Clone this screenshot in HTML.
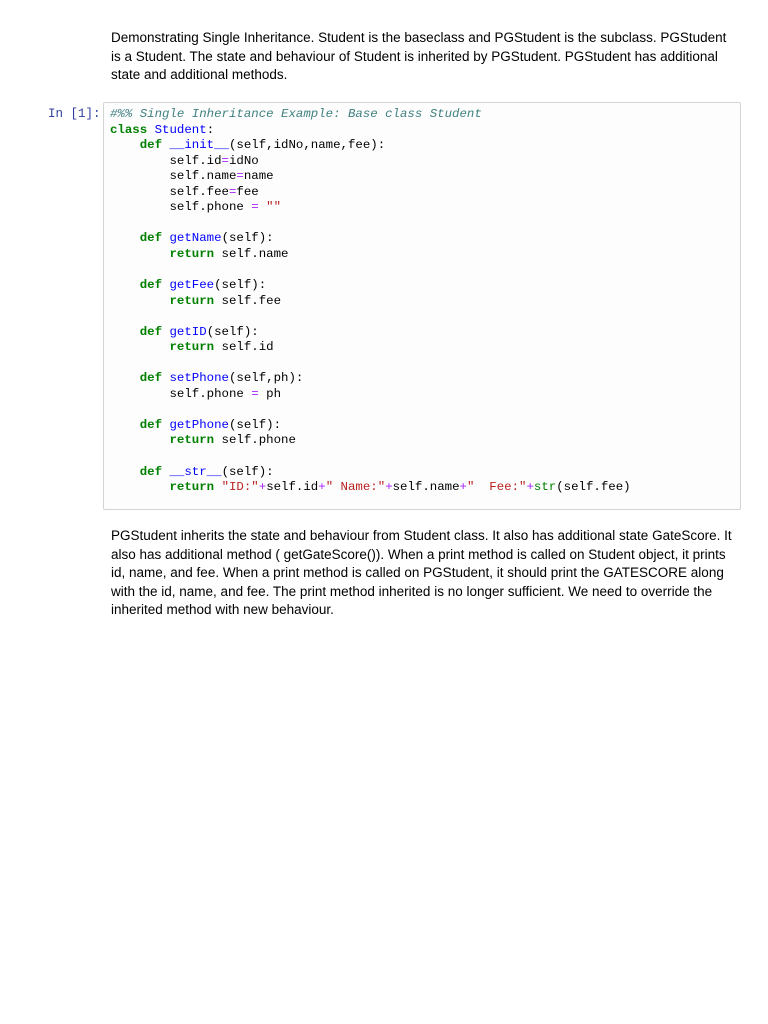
<!DOCTYPE html>
<html><head><meta charset="utf-8"><style>
body{margin:0;background:#fff;width:768px;height:1024px;position:relative;font-family:"Liberation Sans",Arial,sans-serif;}
.p{position:absolute;left:111px;width:626px;font-size:13.5px;line-height:18.5px;color:#000;}
.box{position:absolute;left:103px;top:102px;width:636px;height:406px;border:1px solid #d4d4d4;border-radius:2px;background:#fdfdfd;}
pre{position:absolute;left:110px;top:107px;margin:0;font-family:"Liberation Mono",monospace;font-size:12.4px;line-height:15.55px;color:#000;}
.pr{position:absolute;left:48px;top:107px;font-family:"Liberation Mono",monospace;font-size:12.5px;line-height:15.55px;color:#303f9f;}
.k{color:#008000;font-weight:bold}.n{color:#0000ff}.c{color:#408080;font-style:italic}.o{color:#aa22ff}.s{color:#ba2121}.b{color:#008000}
</style></head><body>
<div class="p" style="top:29px">Demonstrating Single Inheritance. Student is the baseclass and PGStudent is the subclass. PGStudent is a Student. The state and behaviour of Student is inherited by PGStudent. PGStudent has additional state and additional methods.</div>
<div class="pr">In [1]:</div>
<div class="box"></div>
<pre><span class="c">#%% Single Inheritance Example: Base class Student</span>
<span class="k">class</span> <span class="n">Student</span>:
    <span class="k">def</span> <span class="n">__init__</span>(self,idNo,name,fee):
        self.id<span class="o">=</span>idNo
        self.name<span class="o">=</span>name
        self.fee<span class="o">=</span>fee
        self.phone <span class="o">=</span> <span class="s">""</span>

    <span class="k">def</span> <span class="n">getName</span>(self):
        <span class="k">return</span> self.name

    <span class="k">def</span> <span class="n">getFee</span>(self):
        <span class="k">return</span> self.fee

    <span class="k">def</span> <span class="n">getID</span>(self):
        <span class="k">return</span> self.id

    <span class="k">def</span> <span class="n">setPhone</span>(self,ph):
        self.phone <span class="o">=</span> ph

    <span class="k">def</span> <span class="n">getPhone</span>(self):
        <span class="k">return</span> self.phone

    <span class="k">def</span> <span class="n">__str__</span>(self):
        <span class="k">return</span> <span class="s">"ID:"</span><span class="o">+</span>self.id<span class="o">+</span><span class="s">" Name:"</span><span class="o">+</span>self.name<span class="o">+</span><span class="s">"  Fee:"</span><span class="o">+</span><span class="b">str</span>(self.fee)</pre>
<div class="p" style="top:527px">PGStudent inherits the state and behaviour from Student class. It also has additional state GateScore. It also has additional method ( getGateScore()). When a print method is called on Student object, it prints id, name, and fee. When a print method is called on PGStudent, it should print the GATESCORE along with the id, name, and fee. The print method inherited is no longer sufficient. We need to override the inherited method with new behaviour.</div>
</body></html>
